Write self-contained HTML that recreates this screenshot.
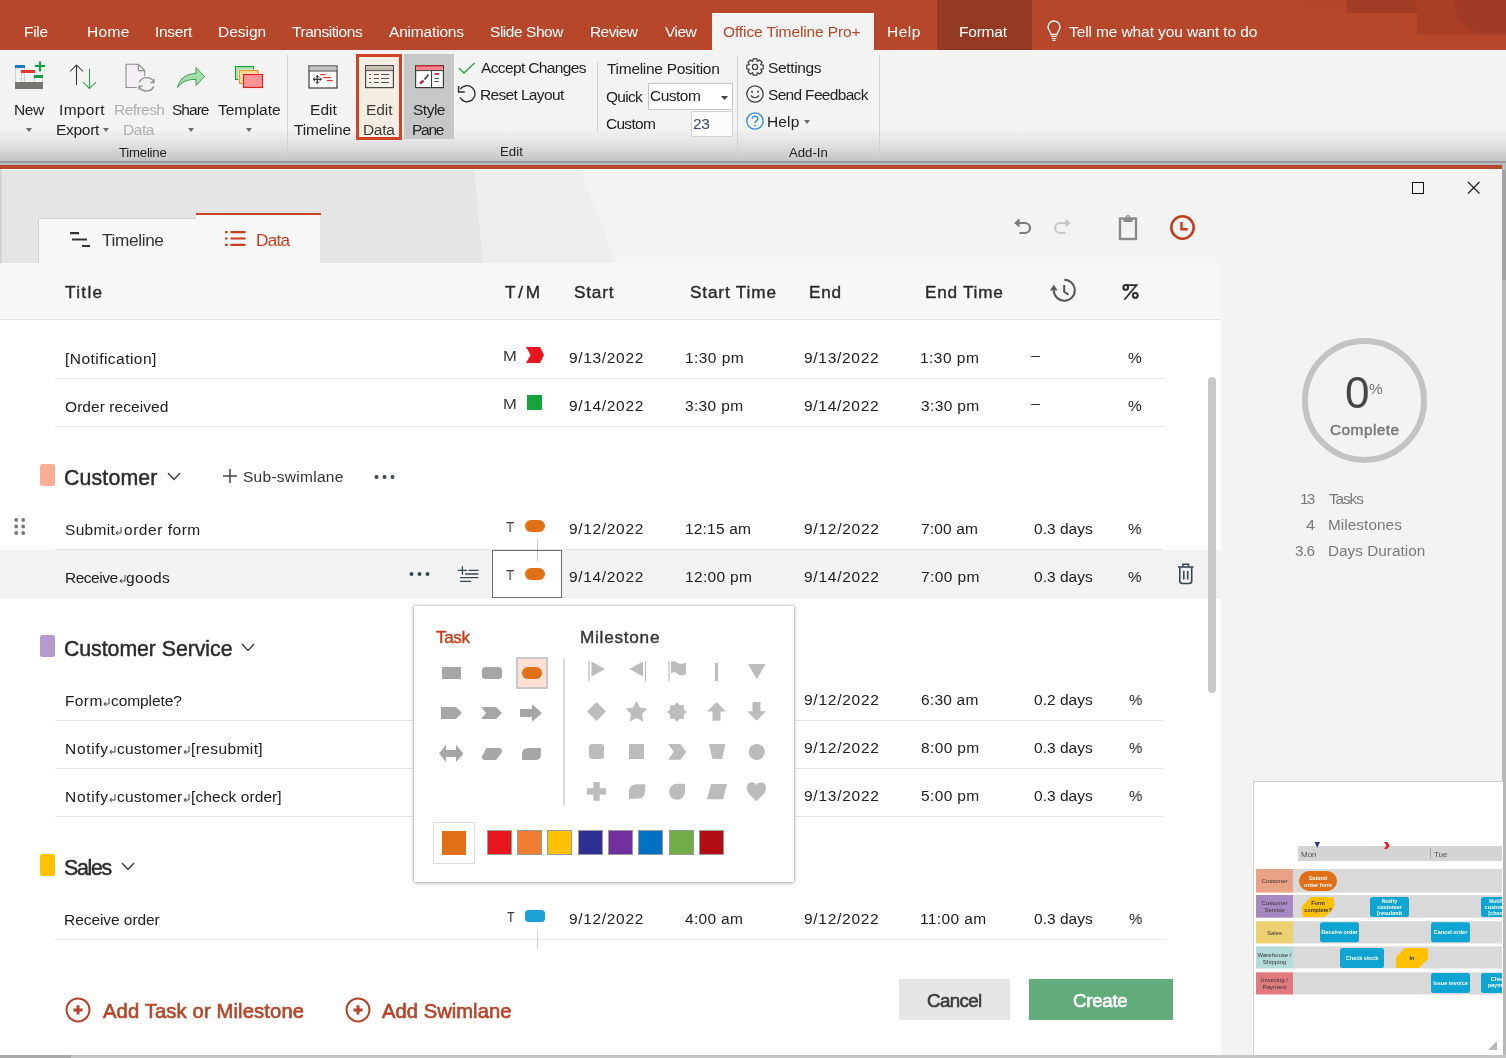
<!DOCTYPE html>
<html><head><meta charset="utf-8"><title>Office Timeline</title><style>
html,body{margin:0;padding:0;}
body{width:1506px;height:1058px;overflow:hidden;position:relative;background:#F3F3F3;font-family:"Liberation Sans",sans-serif;}
.t{position:absolute;white-space:nowrap;will-change:transform;}
.r{position:absolute;}
.s{position:absolute;overflow:visible;}
</style></head><body>
<div class="r" style="left:0px;top:0px;width:1506px;height:50px;background:#B7472A;"></div>
<div class="r" style="left:1347px;top:0px;width:70px;height:13px;background:#A23D25;"></div>
<div class="r" style="left:1417px;top:0px;width:89px;height:35px;background:#A93F26;"></div>
<div class="r" style="left:1300px;top:0px;width:47px;height:12px;background:#B3462A;"></div>
<div class="r" style="left:1455px;top:0px;width:51px;height:33px;background:#A03B23;border-bottom-left-radius:30px"></div>
<div class="r" style="left:712px;top:13px;width:162px;height:38px;background:#F3F3F3;"></div>
<div class="r" style="left:937px;top:0px;width:95px;height:50px;background:#943A22;"></div>
<div class="t" style="left:24.0px;top:24.0px;font-size:15.50px;line-height:15.50px;color:#FFFFFF;letter-spacing:-0.30px;">File</div>
<div class="t" style="left:87.1px;top:24.0px;font-size:15.50px;line-height:15.50px;color:#FFFFFF;letter-spacing:0.32px;">Home</div>
<div class="t" style="left:154.6px;top:24.0px;font-size:15.50px;line-height:15.50px;color:#FFFFFF;letter-spacing:-0.30px;">Insert</div>
<div class="t" style="left:217.8px;top:24.0px;font-size:15.50px;line-height:15.50px;color:#FFFFFF;letter-spacing:-0.01px;">Design</div>
<div class="t" style="left:291.9px;top:24.0px;font-size:15.50px;line-height:15.50px;color:#FFFFFF;letter-spacing:-0.46px;">Transitions</div>
<div class="t" style="left:389.4px;top:24.0px;font-size:15.50px;line-height:15.50px;color:#FFFFFF;letter-spacing:-0.18px;">Animations</div>
<div class="t" style="left:490.4px;top:24.0px;font-size:15.50px;line-height:15.50px;color:#FFFFFF;letter-spacing:-0.46px;">Slide Show</div>
<div class="t" style="left:590.1px;top:24.0px;font-size:15.50px;line-height:15.50px;color:#FFFFFF;letter-spacing:-0.58px;">Review</div>
<div class="t" style="left:665.1px;top:24.0px;font-size:15.50px;line-height:15.50px;color:#FFFFFF;letter-spacing:-0.55px;">View</div>
<div class="t" style="left:723.3px;top:24.0px;font-size:15.50px;line-height:15.50px;color:#B7472A;letter-spacing:-0.11px;">Office Timeline Pro+</div>
<div class="t" style="left:886.8px;top:24.0px;font-size:15.50px;line-height:15.50px;color:#FFFFFF;letter-spacing:0.50px;">Help</div>
<div class="t" style="left:958.7px;top:24.0px;font-size:15.50px;line-height:15.50px;color:#FFFFFF;letter-spacing:-0.21px;">Format</div>
<div class="t" style="left:1068.7px;top:24.0px;font-size:15.50px;line-height:15.50px;color:#FFFFFF;letter-spacing:-0.11px;">Tell me what you want to do</div>
<svg class="s" style="left:1045px;top:20px;" width="18" height="22" viewBox="0 0 18 22"><path d="M6 14.5 C6 12 3 10.5 3 7 A6 6 0 0 1 15 7 C15 10.5 12 12 12 14.5 Z" fill="none" stroke="#fff" stroke-width="1.3"/><path d="M6.3 16.5 H11.7 M6.8 18.5 H11.2 M7.5 20.3 H10.5" stroke="#fff" stroke-width="1.2"/></svg>
<div class="r" style="left:0px;top:50px;width:1506px;height:80px;background:#F3F3F3;"></div>
<div class="r" style="left:0px;top:130px;width:1506px;height:31px;background:linear-gradient(#F1F1F1,#E4E4E4 40%,#C5C5C5);"></div>
<div class="r" style="left:0px;top:161px;width:1506px;height:2px;background:#9C9C9C;"></div>
<div class="r" style="left:0px;top:163px;width:1506px;height:2px;background:#B4BBBD;"></div>
<div class="r" style="left:287px;top:55px;width:1px;height:103px;background:#D2D2D2;"></div>
<div class="r" style="left:597px;top:62px;width:1px;height:70px;background:#D2D2D2;"></div>
<div class="r" style="left:737px;top:55px;width:1px;height:103px;background:#D2D2D2;"></div>
<div class="r" style="left:879px;top:55px;width:1px;height:103px;background:#D2D2D2;"></div>
<svg class="s" style="left:14px;top:60px;" width="32" height="30" viewBox="0 0 32 30"><path d="M1.5 8 V22 M7.5 13 V22 M10.5 8 V22 M20.5 18 V22 M28.5 18 V22" stroke="#CFCFCF" stroke-width="1"/><rect x="1" y="5" width="10" height="3" fill="#1F7BC8"/><rect x="7" y="10" width="14" height="3" fill="#DE3B2B"/><rect x="20" y="15" width="9" height="3" fill="#0E9F3E"/><path d="M21 6 H31 M26 1.5 V11.5" stroke="#0E9F3E" stroke-width="2.2"/><rect x="1" y="22" width="28" height="7" fill="#767572"/></svg>
<div class="t" style="left:13.5px;top:102.0px;font-size:15.50px;line-height:15.50px;color:#232323;letter-spacing:-0.37px;">New</div>
<svg class="s" style="left:26px;top:128px;" width="6" height="4" viewBox="0 0 6 4"><path d="M0 0 H6 L3.0 4 Z" fill="#6B6B6B"/></svg>
<svg class="s" style="left:68px;top:63px;" width="30" height="27" viewBox="0 0 30 27"><path d="M8.5 2 V22 M2 8.5 L8.5 2 L15 8.5" fill="none" stroke="#333" stroke-width="1.05"/><path d="M21.5 6 V25.5 M15 19 L21.5 25.5 L28 19" fill="none" stroke="#2A9A48" stroke-width="1.05"/></svg>
<div class="t" style="left:59.2px;top:102.0px;font-size:15.50px;line-height:15.50px;color:#232323;letter-spacing:0.32px;">Import</div>
<div class="t" style="left:55.6px;top:122.0px;font-size:15.50px;line-height:15.50px;color:#232323;letter-spacing:-0.28px;">Export</div>
<svg class="s" style="left:103px;top:128px;" width="6" height="4" viewBox="0 0 6 4"><path d="M0 0 H6 L3.0 4 Z" fill="#6B6B6B"/></svg>
<svg class="s" style="left:124px;top:62px;" width="34" height="32" viewBox="0 0 34 32"><path d="M2 2.3 H14.4 L20.7 8.6 V25.5 H2 Z" fill="#F4EFF5"/><circle cx="22.5" cy="22.4" r="9.6" fill="#F3F3F3"/><path d="M2 2.3 H14.4 L20.7 8.6 V14.2 M2 2.3 V25.5 H12.8 M14.4 2.3 V8.6 H20.7" fill="none" stroke="#8E8E8E" stroke-width="1.1"/><path d="M15.2 20.6 A8 8 0 0 1 29.8 20.2 M29.8 24.4 A8 8 0 0 1 15.2 24.4" fill="none" stroke="#8E8E8E" stroke-width="1.4"/><path d="M30 16.8 V20.6 H26.4 M15 28 V24.2 H18.6" fill="none" stroke="#8E8E8E" stroke-width="1.3"/></svg>
<div class="t" style="left:113.5px;top:102.0px;font-size:15.50px;line-height:15.50px;color:#B0B0B0;letter-spacing:-0.55px;">Refresh</div>
<div class="t" style="left:122.6px;top:122.0px;font-size:15.50px;line-height:15.50px;color:#B0B0B0;letter-spacing:-0.42px;">Data</div>
<svg class="s" style="left:176px;top:66px;" width="31" height="24" viewBox="0 0 31 24"><path d="M1.5 21.5 C4 12 11 7.5 20 7.5 V1.5 L28.5 10.5 L20 19.5 V13.5 C12 13 6 15.5 1.5 21.5 Z" fill="#A5DDAA" stroke="#3AA24C" stroke-width="1"/></svg>
<div class="t" style="left:171.6px;top:102.0px;font-size:15.50px;line-height:15.50px;color:#232323;letter-spacing:-0.97px;">Share</div>
<svg class="s" style="left:188px;top:128px;" width="6" height="4" viewBox="0 0 6 4"><path d="M0 0 H6 L3.0 4 Z" fill="#6B6B6B"/></svg>
<svg class="s" style="left:234px;top:65px;" width="30" height="24" viewBox="0 0 30 24"><rect x="1.5" y="1.5" width="18" height="13" fill="#A9DDB0" stroke="#17A23E" stroke-width="1.1"/><rect x="4.5" y="4.5" width="20.5" height="15" fill="#FFFFFF"/><rect x="5.5" y="5.5" width="18.5" height="13" fill="#F5DE98" stroke="#EE8E2E" stroke-width="1.1"/><rect x="8.5" y="8.5" width="21" height="15" fill="#FFFFFF"/><rect x="9.5" y="9.5" width="19" height="13" fill="#FF9499" stroke="#DD1F15" stroke-width="1.2"/></svg>
<div class="t" style="left:217.7px;top:102.0px;font-size:15.50px;line-height:15.50px;color:#232323;letter-spacing:-0.05px;">Template</div>
<svg class="s" style="left:246px;top:128px;" width="6" height="4" viewBox="0 0 6 4"><path d="M0 0 H6 L3.0 4 Z" fill="#6B6B6B"/></svg>
<div class="t" style="left:119.2px;top:146.0px;font-size:13.20px;line-height:13.20px;color:#232323;letter-spacing:-0.23px;">Timeline</div>
<svg class="s" style="left:308px;top:65px;" width="30" height="24" viewBox="0 0 30 24"><rect x="1" y="1" width="28" height="22" fill="#fff" stroke="#3C3C3C" stroke-width="1.2"/><rect x="1.6" y="1.6" width="26.8" height="4" fill="#C3C3C3"/><path d="M1 6 H29" stroke="#3C3C3C" stroke-width="1"/><path d="M5 14.3 H13.5 M9.3 10.5 V18.5" stroke="#3C3C3C" stroke-width="1.3"/><path d="M7 12.6 L5 14.3 L7 16 M11.5 12.6 L13.5 14.3 L11.5 16 M7.6 12.2 L9.3 10.5 L11 12.2 M7.6 16.8 L9.3 18.5 L11 16.8" fill="none" stroke="#3C3C3C" stroke-width="1"/><rect x="12" y="8.9" width="5.6" height="1.3" fill="#E03A3A"/><rect x="15.2" y="11.9" width="7.8" height="1.3" fill="#E03A3A"/><rect x="18.8" y="14.9" width="6" height="1.3" fill="#E03A3A"/></svg>
<div class="t" style="left:309.5px;top:102.0px;font-size:15.50px;line-height:15.50px;color:#232323;letter-spacing:0.05px;">Edit</div>
<div class="t" style="left:294.3px;top:122.0px;font-size:15.50px;line-height:15.50px;color:#232323;letter-spacing:-0.13px;">Timeline</div>
<div class="r" style="left:356px;top:54px;width:40px;height:80px;background:#F4EDE1;border:3px solid #CF4426"></div>
<svg class="s" style="left:365px;top:65px;" width="29" height="24" viewBox="0 0 29 24"><rect x="0.6" y="0.6" width="27.8" height="22" fill="#F7F1E6" stroke="#4A4A4A" stroke-width="1.2"/><rect x="1.2" y="1.2" width="26.6" height="4" fill="#C7BFB0"/><path d="M1 5.6 H28" stroke="#4A4A4A" stroke-width="1"/><path d="M4 9.5 H6 M4 13.5 H6 M4 17.5 H6" stroke="#555" stroke-width="1"/><path d="M9 9.5 H14 M9 13.5 H14 M9 17.5 H14 M16 9.5 H24 M16 13.5 H24 M16 17.5 H24" stroke="#555" stroke-width="1"/></svg>
<div class="t" style="left:365.7px;top:102.0px;font-size:15.50px;line-height:15.50px;color:#3A3A3A;letter-spacing:-0.08px;">Edit</div>
<div class="t" style="left:362.7px;top:122.0px;font-size:15.50px;line-height:15.50px;color:#3A3A3A;letter-spacing:-0.32px;">Data</div>
<div class="r" style="left:404px;top:54px;width:50px;height:85px;background:#C7C7C7;"></div>
<svg class="s" style="left:415px;top:65px;" width="29" height="24" viewBox="0 0 29 24"><rect x="0.6" y="0.6" width="27.8" height="22" fill="#fff" stroke="#3C3C3C" stroke-width="1.2"/><rect x="1.2" y="1.2" width="26.6" height="4.2" fill="#F7858F"/><path d="M1 1 H28" stroke="#E0303A" stroke-width="1.2"/><path d="M1 5.6 H28 M16.5 5.6 V23" stroke="#3C3C3C" stroke-width="1"/><path d="M5 18.5 L8.5 15.5" stroke="#D9262E" stroke-width="2.5"/><path d="M9.5 14.5 L13.5 9.5" stroke="#3C3C3C" stroke-width="1.6"/><path d="M19.5 9 H24 " stroke="#D9262E" stroke-width="1.8"/><path d="M19.5 13.5 H24 M19.5 16.5 H24" stroke="#555" stroke-width="1"/></svg>
<div class="t" style="left:412.8px;top:102.0px;font-size:15.50px;line-height:15.50px;color:#232323;letter-spacing:-0.50px;">Style</div>
<div class="t" style="left:412.3px;top:122.0px;font-size:15.50px;line-height:15.50px;color:#232323;letter-spacing:-1.28px;">Pane</div>
<svg class="s" style="left:458px;top:62px;" width="18" height="12" viewBox="0 0 18 12"><path d="M1 6 L6 11 L16.5 1" fill="none" stroke="#2FA046" stroke-width="1.4"/></svg>
<div class="t" style="left:480.8px;top:60.0px;font-size:15.50px;line-height:15.50px;color:#232323;letter-spacing:-0.63px;">Accept Changes</div>
<svg class="s" style="left:457px;top:84px;" width="20" height="20" viewBox="0 0 20 20"><path d="M2.9 13.4 A8 8 0 1 0 3.4 5.2" fill="none" stroke="#333" stroke-width="1.3"/><path d="M1.6 2 V7.9 H7.8" fill="none" stroke="#333" stroke-width="1.5"/></svg>
<div class="t" style="left:479.6px;top:87.0px;font-size:15.50px;line-height:15.50px;color:#232323;letter-spacing:-0.65px;">Reset Layout</div>
<div class="t" style="left:499.9px;top:145.0px;font-size:13.20px;line-height:13.20px;color:#232323;letter-spacing:0.07px;">Edit</div>
<div class="t" style="left:606.7px;top:61.0px;font-size:15.50px;line-height:15.50px;color:#232323;letter-spacing:-0.29px;">Timeline Position</div>
<div class="t" style="left:606.3px;top:89.0px;font-size:15.50px;line-height:15.50px;color:#232323;letter-spacing:-0.73px;">Quick</div>
<div class="r" style="left:648px;top:83px;width:83px;height:25px;background:#fff;border:1px solid #C6C6C6"></div>
<div class="t" style="left:650.4px;top:88.0px;font-size:15.50px;line-height:15.50px;color:#232323;letter-spacing:-0.50px;">Custom</div>
<svg class="s" style="left:721px;top:96px;" width="7" height="4" viewBox="0 0 7 4"><path d="M0 0 H7 L3.5 4 Z" fill="#444"/></svg>
<div class="t" style="left:606.2px;top:116.0px;font-size:15.50px;line-height:15.50px;color:#232323;letter-spacing:-0.72px;">Custom</div>
<div class="r" style="left:691px;top:111px;width:40px;height:24px;background:#FBFBFB;border:1px solid #D4D4D4"></div>
<div class="t" style="left:693.4px;top:116.0px;font-size:15.50px;line-height:15.50px;color:#3B4A6B;letter-spacing:-0.41px;">23</div>
<svg class="s" style="left:746px;top:58px;" width="18" height="18" viewBox="0 0 18 18"><g fill="none" stroke="#3C3C3C" stroke-width="1.2"><path d="M17.22 7.25 L17.22 10.75 L14.75 11.32 L16.04 13.57 L13.57 16.04 L11.42 14.71 L10.75 17.22 L7.25 17.22 L6.68 14.75 L4.43 16.04 L1.96 13.57 L3.29 11.42 L0.78 10.75 L0.78 7.25 L3.25 6.68 L1.96 4.43 L4.43 1.96 L6.58 3.29 L7.25 0.78 L10.75 0.78 L11.32 3.25 L13.57 1.96 L16.04 4.43 L14.71 6.58 Z"/><circle cx="9" cy="9" r="2.6"/></g></svg>
<div class="t" style="left:767.9px;top:60.0px;font-size:15.50px;line-height:15.50px;color:#232323;letter-spacing:-0.36px;">Settings</div>
<svg class="s" style="left:746px;top:85px;" width="18" height="18" viewBox="0 0 18 18"><circle cx="9" cy="9" r="8.2" fill="none" stroke="#3C3C3C" stroke-width="1.2"/><circle cx="6" cy="6.8" r="1" fill="#3C3C3C"/><circle cx="12" cy="6.8" r="1" fill="#3C3C3C"/><path d="M4.8 10.5 Q9 15 13.2 10.5" fill="none" stroke="#3C3C3C" stroke-width="1.2"/></svg>
<div class="t" style="left:767.9px;top:87.0px;font-size:15.50px;line-height:15.50px;color:#232323;letter-spacing:-0.68px;">Send Feedback</div>
<svg class="s" style="left:746px;top:112px;" width="18" height="18" viewBox="0 0 18 18"><circle cx="9" cy="9" r="8.2" fill="none" stroke="#2B88D8" stroke-width="1.3"/><path d="M6.3 6.8 A2.7 2.7 0 1 1 9.5 9.4 Q9 9.8 9 11.2" fill="none" stroke="#2B88D8" stroke-width="1.3"/><circle cx="9" cy="13.6" r="0.9" fill="#2B88D8"/></svg>
<div class="t" style="left:767.4px;top:114.0px;font-size:15.50px;line-height:15.50px;color:#232323;letter-spacing:0.14px;">Help</div>
<svg class="s" style="left:804px;top:120px;" width="6" height="4" viewBox="0 0 6 4"><path d="M0 0 H6 L3.0 4 Z" fill="#6B6B6B"/></svg>
<div class="t" style="left:789.3px;top:146.0px;font-size:13.20px;line-height:13.20px;color:#232323;letter-spacing:-0.02px;">Add-In</div>
<div class="r" style="left:0px;top:165px;width:1502px;height:4px;background:#B7472A;"></div>
<div class="r" style="left:1502px;top:163px;width:4px;height:895px;background:#B8B8B8;"></div>
<div class="r" style="left:1502px;top:170px;width:4px;height:110px;background:#A2A2A2;"></div>
<svg class="s" style="left:0px;top:169px;" width="1502" height="94" viewBox="0 0 1502 94"><rect x="0" y="0" width="1502" height="94" fill="#F3F3F3"/><path d="M0 0 H580 L616 94 H0 Z" fill="#EEEEEE"/><path d="M0 0 H474 L483 94 H0 Z" fill="#E5E5E5"/><rect x="0" y="0" width="1502" height="1" fill="#FAFAFA"/><rect x="0" y="0" width="1.5" height="94" fill="#D0D0D0"/></svg>
<div class="r" style="left:38px;top:218px;width:157px;height:44px;background:#F7F7F7;border:1px solid #D2D2D2"></div>
<div class="r" style="left:196px;top:213px;width:125px;height:50px;background:#F7F7F7;"></div>
<div class="r" style="left:196px;top:213px;width:125px;height:2px;background:#C9472A;"></div>
<div class="r" style="left:320px;top:215px;width:1px;height:48px;background:#E2E2E2;"></div>
<svg class="s" style="left:70px;top:232px;" width="21" height="16" viewBox="0 0 21 16"><path d="M0 1.2 H9 M2 7.5 H17 M12 14 H20" stroke="#333" stroke-width="2.2"/></svg>
<div class="t" style="left:102.4px;top:232.0px;font-size:17.20px;line-height:17.20px;color:#333;letter-spacing:-0.34px;">Timeline</div>
<svg class="s" style="left:225px;top:231px;" width="22" height="16" viewBox="0 0 22 16"><path d="M0 1.2 H2.6 M0 7.5 H2.6 M0 13.8 H2.6 M5.5 1.2 H20.5 M5.5 7.5 H20.5 M5.5 13.8 H20.5" stroke="#C43E1C" stroke-width="2.2"/></svg>
<div class="t" style="left:255.6px;top:232.0px;font-size:17.20px;line-height:17.20px;color:#C43E1C;letter-spacing:-0.77px;">Data</div>
<div class="r" style="left:1412px;top:182px;width:10px;height:10px;border:1.3px solid #111"></div>
<svg class="s" style="left:1467px;top:181px;" width="14" height="14" viewBox="0 0 14 14"><path d="M1 1 L12.5 12.5 M12.5 1 L1 12.5" stroke="#222" stroke-width="1.3"/></svg>
<svg class="s" style="left:1013px;top:217px;" width="20" height="19" viewBox="0 0 20 19"><path d="M5 6 H12 A5 5 0 0 1 12 16 H6.5" fill="none" stroke="#7A7A7A" stroke-width="2.2"/><path d="M1 6 L6.5 1.5 V10.5 Z" fill="#7A7A7A"/></svg>
<svg class="s" style="left:1052px;top:217px;" width="20" height="19" viewBox="0 0 20 19"><path d="M15 6 H8 A5 5 0 0 0 8 16 H13.5" fill="none" stroke="#C8C8C8" stroke-width="2.2"/><path d="M19 6 L13.5 1.5 V10.5 Z" fill="#C8C8C8"/></svg>
<svg class="s" style="left:1118px;top:215px;" width="21" height="26" viewBox="0 0 21 26"><rect x="2" y="3.5" width="16" height="20.5" fill="none" stroke="#8A8A8A" stroke-width="2.4"/><rect x="5.5" y="3" width="9" height="4" fill="#8A8A8A"/><circle cx="10" cy="2.5" r="1.8" fill="none" stroke="#8A8A8A" stroke-width="1.2"/></svg>
<svg class="s" style="left:1169px;top:214px;" width="28" height="28" viewBox="0 0 28 28"><circle cx="13.5" cy="13.5" r="11.2" fill="none" stroke="#C43E1C" stroke-width="2.6"/><path d="M12.5 8 V15.2 H18.8" fill="none" stroke="#C43E1C" stroke-width="2.4"/></svg>
<div class="r" style="left:0px;top:263px;width:1221px;height:792px;background:#FFFFFF;"></div>
<div class="r" style="left:1221px;top:263px;width:281px;height:792px;background:#F3F3F3;"></div>
<div class="r" style="left:0px;top:263px;width:1221px;height:56px;background:#F7F7F7;"></div>
<div class="r" style="left:0px;top:319px;width:1221px;height:1px;background:#E3E3E3;"></div>
<div class="t" style="left:65.2px;top:284.0px;font-size:17.20px;line-height:17.20px;color:#2B2B2B;-webkit-text-stroke:0.4px #2B2B2B;letter-spacing:1.33px;">Title</div>
<div class="t" style="left:504.9px;top:284.0px;font-size:17.20px;line-height:17.20px;color:#2B2B2B;-webkit-text-stroke:0.4px #2B2B2B;letter-spacing:2.72px;">T/M</div>
<div class="t" style="left:573.8px;top:284.0px;font-size:17.20px;line-height:17.20px;color:#2B2B2B;-webkit-text-stroke:0.4px #2B2B2B;letter-spacing:0.79px;">Start</div>
<div class="t" style="left:689.9px;top:284.0px;font-size:17.20px;line-height:17.20px;color:#2B2B2B;-webkit-text-stroke:0.4px #2B2B2B;letter-spacing:0.85px;">Start Time</div>
<div class="t" style="left:809.2px;top:284.0px;font-size:17.20px;line-height:17.20px;color:#2B2B2B;-webkit-text-stroke:0.4px #2B2B2B;letter-spacing:0.75px;">End</div>
<div class="t" style="left:925.3px;top:284.0px;font-size:17.20px;line-height:17.20px;color:#2B2B2B;-webkit-text-stroke:0.4px #2B2B2B;letter-spacing:0.74px;">End Time</div>
<svg class="s" style="left:1120px;top:282px;" width="22" height="22" viewBox="0 0 22 22"><g fill="none" stroke="#2B2B2B" stroke-width="2"><circle cx="5.7" cy="5.4" r="2.4"/><circle cx="15.3" cy="13.4" r="2.4"/></g><path d="M5.7 3.1 H16.6 L4.4 17.8" fill="none" stroke="#2B2B2B" stroke-width="1.7"/></svg>
<svg class="s" style="left:1049px;top:278px;" width="28" height="25" viewBox="0 0 28 25"><path d="M15.3 1.8 A10.5 10.5 0 1 1 4.8 12.5" fill="none" stroke="#555" stroke-width="2"/><path d="M1 12.6 H8.6 L4.8 6.8 Z" fill="#555"/><path d="M15.2 7 V13.8 L19.6 16.6" fill="none" stroke="#555" stroke-width="2"/></svg>
<div class="r" style="left:55px;top:378px;width:1109px;height:1px;background:#E6E6E6;"></div>
<div class="r" style="left:55px;top:426px;width:1109px;height:1px;background:#E6E6E6;"></div>
<div class="r" style="left:55px;top:549px;width:1109px;height:1px;background:#E6E6E6;"></div>
<div class="r" style="left:55px;top:720px;width:1109px;height:1px;background:#E6E6E6;"></div>
<div class="r" style="left:55px;top:768px;width:1109px;height:1px;background:#E6E6E6;"></div>
<div class="r" style="left:55px;top:816px;width:1109px;height:1px;background:#E6E6E6;"></div>
<div class="r" style="left:55px;top:939px;width:1109px;height:1px;background:#E6E6E6;"></div>
<div class="t" style="left:64.5px;top:351.0px;font-size:15.50px;line-height:15.50px;color:#202020;letter-spacing:0.46px;">[Notification]</div>
<div class="t" style="left:502.8px;top:348.0px;font-size:15.50px;line-height:15.50px;color:#3A3A3A;transform:scaleX(1.069);transform-origin:1.24px 0;">M</div>
<svg class="s" style="left:526px;top:347px;" width="18" height="16" viewBox="0 0 18 16"><path d="M0 0 H14 L18 8 L14 16 H0 L4.6 8 Z" fill="#E8141E"/></svg>
<div class="t" style="left:568.6px;top:350.0px;font-size:15.50px;line-height:15.50px;color:#202020;letter-spacing:0.67px;">9/13/2022</div>
<div class="t" style="left:684.5px;top:350.0px;font-size:15.50px;line-height:15.50px;color:#202020;letter-spacing:0.44px;">1:30 pm</div>
<div class="t" style="left:804.3px;top:350.0px;font-size:15.50px;line-height:15.50px;color:#202020;letter-spacing:0.71px;">9/13/2022</div>
<div class="t" style="left:920.1px;top:350.0px;font-size:15.50px;line-height:15.50px;color:#202020;letter-spacing:0.47px;">1:30 pm</div>
<div class="r" style="left:1031px;top:356px;width:9px;height:1.3000000000000114px;background:#333;"></div>
<div class="t" style="left:1128.3px;top:350.0px;font-size:15.50px;line-height:15.50px;color:#202020;">%</div>
<div class="t" style="left:64.9px;top:399.0px;font-size:15.50px;line-height:15.50px;color:#202020;letter-spacing:0.07px;">Order received</div>
<div class="t" style="left:502.8px;top:396.0px;font-size:15.50px;line-height:15.50px;color:#3A3A3A;transform:scaleX(1.069);transform-origin:1.24px 0;">M</div>
<div class="r" style="left:527px;top:395px;width:15px;height:15px;background:#17A23C;"></div>
<div class="t" style="left:568.6px;top:398.0px;font-size:15.50px;line-height:15.50px;color:#202020;letter-spacing:0.67px;">9/14/2022</div>
<div class="t" style="left:685.2px;top:398.0px;font-size:15.50px;line-height:15.50px;color:#202020;letter-spacing:0.34px;">3:30 pm</div>
<div class="t" style="left:804.3px;top:398.0px;font-size:15.50px;line-height:15.50px;color:#202020;letter-spacing:0.71px;">9/14/2022</div>
<div class="t" style="left:920.8px;top:398.0px;font-size:15.50px;line-height:15.50px;color:#202020;letter-spacing:0.37px;">3:30 pm</div>
<div class="r" style="left:1031px;top:403.5px;width:9px;height:1.3000000000000114px;background:#333;"></div>
<div class="t" style="left:1128.3px;top:398.0px;font-size:15.50px;line-height:15.50px;color:#202020;">%</div>
<div class="r" style="left:40px;top:464px;width:15px;height:22px;background:#F7AE95;border-radius:2.5px"></div>
<div class="t" style="left:64.4px;top:468.0px;font-size:21.30px;line-height:21.30px;color:#2B2B2B;-webkit-text-stroke:0.45px #2B2B2B;letter-spacing:0.16px;">Customer</div>
<svg class="s" style="left:167px;top:472px;" width="14" height="9" viewBox="0 0 14 9"><path d="M1 1 L7.0 7.5 L13 1" fill="none" stroke="#3A3A3A" stroke-width="1.4"/></svg>
<svg class="s" style="left:222px;top:468px;" width="16" height="16" viewBox="0 0 16 16"><path d="M8 1 V15 M1 8 H15" stroke="#444" stroke-width="1.5"/></svg>
<div class="t" style="left:242.7px;top:469.0px;font-size:15.50px;line-height:15.50px;color:#333;letter-spacing:0.27px;">Sub-swimlane</div>
<svg class="s" style="left:374px;top:474px;" width="22" height="6" viewBox="0 0 22 6"><circle cx="2.5" cy="3" r="2" fill="#37474F"/><circle cx="10.5" cy="3" r="2" fill="#37474F"/><circle cx="18.5" cy="3" r="2" fill="#37474F"/></svg>
<svg class="s" style="left:13px;top:517px;" width="14" height="19" viewBox="0 0 14 19"><circle cx="3.2" cy="3" r="1.9" fill="#777"/><circle cx="3.2" cy="9.5" r="1.9" fill="#777"/><circle cx="3.2" cy="16" r="1.9" fill="#777"/><circle cx="10.2" cy="3" r="1.9" fill="#777"/><circle cx="10.2" cy="9.5" r="1.9" fill="#777"/><circle cx="10.2" cy="16" r="1.9" fill="#777"/></svg>
<div class="t" style="left:64.8px;top:522.0px;font-size:15.50px;line-height:15.50px;color:#202020;letter-spacing:0.33px;">Submit</div>
<svg class="s" style="left:115.3px;top:526px;" width="8" height="11" viewBox="0 0 8 11"><path d="M6 1 V7 H1" fill="none" stroke="#333" stroke-width="0.95"/><path d="M2.9 4.9 L0.9 7 L2.9 9.1" fill="none" stroke="#333" stroke-width="0.95"/></svg>
<div class="t" style="left:123.9px;top:522.0px;font-size:15.50px;line-height:15.50px;color:#202020;letter-spacing:0.53px;">order form</div>
<div class="t" style="left:505.9px;top:519.0px;font-size:15.50px;line-height:15.50px;color:#3A3A3A;transform:scaleX(0.860);transform-origin:0.31px 0;">T</div>
<div class="r" style="left:525px;top:520px;width:20px;height:12px;background:#E07016;border-radius:6.0px"></div>
<div class="r" style="left:537px;top:539px;width:1px;height:22px;background:#C8C8C8;"></div>
<div class="t" style="left:568.6px;top:521.0px;font-size:15.50px;line-height:15.50px;color:#202020;letter-spacing:0.67px;">9/12/2022</div>
<div class="t" style="left:684.5px;top:521.0px;font-size:15.50px;line-height:15.50px;color:#202020;letter-spacing:0.18px;">12:15 am</div>
<div class="t" style="left:804.3px;top:521.0px;font-size:15.50px;line-height:15.50px;color:#202020;letter-spacing:0.74px;">9/12/2022</div>
<div class="t" style="left:920.5px;top:521.0px;font-size:15.50px;line-height:15.50px;color:#202020;letter-spacing:0.16px;">7:00 am</div>
<div class="t" style="left:1033.5px;top:521.0px;font-size:15.50px;line-height:15.50px;color:#202020;letter-spacing:0.01px;">0.3 days</div>
<div class="t" style="left:1128.4px;top:521.0px;font-size:15.50px;line-height:15.50px;color:#202020;transform:scaleX(0.983);transform-origin:0.54px 0;">%</div>
<div class="r" style="left:0px;top:550px;width:1221px;height:48px;background:#F2F2F2;"></div>
<div class="r" style="left:0px;top:597px;width:1221px;height:1px;background:#E8E8E8;"></div>
<div class="r" style="left:537px;top:550px;width:1px;height:11px;background:#C8C8C8;"></div>
<div class="t" style="left:65.0px;top:570.0px;font-size:15.50px;line-height:15.50px;color:#202020;letter-spacing:-0.50px;">Receive</div>
<svg class="s" style="left:118.5px;top:574px;" width="8" height="11" viewBox="0 0 8 11"><path d="M6 1 V7 H1" fill="none" stroke="#333" stroke-width="0.95"/><path d="M2.9 4.9 L0.9 7 L2.9 9.1" fill="none" stroke="#333" stroke-width="0.95"/></svg>
<div class="t" style="left:126.3px;top:570.0px;font-size:15.50px;line-height:15.50px;color:#202020;letter-spacing:0.36px;">goods</div>
<svg class="s" style="left:409px;top:571px;" width="22" height="6" viewBox="0 0 22 6"><circle cx="2.5" cy="3" r="2" fill="#37474F"/><circle cx="10.5" cy="3" r="2" fill="#37474F"/><circle cx="18.5" cy="3" r="2" fill="#37474F"/></svg>
<svg class="s" style="left:457px;top:565px;" width="22" height="18" viewBox="0 0 22 18"><path d="M1 5.4 H10 M5.4 1.2 V9.7" stroke="#37474F" stroke-width="1.3"/><path d="M12 5.4 H21 M8.5 9 H21 M3.5 12.6 H21 M3.5 16.3 H13.5" stroke="#37474F" stroke-width="1.3" stroke-linecap="round"/></svg>
<div class="r" style="left:492px;top:550px;width:68px;height:46px;background:#fff;border:1px solid #6B6B6B"></div>
<div class="r" style="left:537px;top:551px;width:1px;height:10px;background:#C8C8C8;"></div>
<div class="t" style="left:505.9px;top:567.0px;font-size:15.50px;line-height:15.50px;color:#3A3A3A;transform:scaleX(0.860);transform-origin:0.31px 0;">T</div>
<div class="r" style="left:525px;top:568px;width:20px;height:12px;background:#E07016;border-radius:6.0px"></div>
<div class="t" style="left:568.6px;top:569.0px;font-size:15.50px;line-height:15.50px;color:#202020;letter-spacing:0.67px;">9/14/2022</div>
<div class="t" style="left:684.5px;top:569.0px;font-size:15.50px;line-height:15.50px;color:#202020;letter-spacing:0.32px;">12:00 pm</div>
<div class="t" style="left:804.3px;top:569.0px;font-size:15.50px;line-height:15.50px;color:#202020;letter-spacing:0.74px;">9/14/2022</div>
<div class="t" style="left:920.5px;top:569.0px;font-size:15.50px;line-height:15.50px;color:#202020;letter-spacing:0.41px;">7:00 pm</div>
<div class="t" style="left:1033.5px;top:569.0px;font-size:15.50px;line-height:15.50px;color:#202020;letter-spacing:0.01px;">0.3 days</div>
<div class="t" style="left:1128.4px;top:569.0px;font-size:15.50px;line-height:15.50px;color:#202020;transform:scaleX(0.983);transform-origin:0.54px 0;">%</div>
<svg class="s" style="left:1177px;top:563px;" width="18" height="22" viewBox="0 0 18 22"><path d="M1 4 H16.5" stroke="#37474F" stroke-width="1.6"/><path d="M6 3.5 V1.2 H11.5 V3.5" fill="none" stroke="#37474F" stroke-width="1.5"/><path d="M2.8 4.5 V18 Q2.8 20.5 5.5 20.5 H12 Q14.7 20.5 14.7 18 V4.5" fill="none" stroke="#37474F" stroke-width="1.6"/><path d="M6.8 8 V16.5 M10.7 8 V16.5" stroke="#37474F" stroke-width="1.6"/></svg>
<div class="r" style="left:40px;top:635px;width:15px;height:22px;background:#B59AD0;border-radius:2.5px"></div>
<div class="t" style="left:64.4px;top:639.0px;font-size:21.30px;line-height:21.30px;color:#2B2B2B;-webkit-text-stroke:0.45px #2B2B2B;letter-spacing:-0.05px;">Customer Service</div>
<svg class="s" style="left:241px;top:643px;" width="14" height="9" viewBox="0 0 14 9"><path d="M1 1 L7.0 7.5 L13 1" fill="none" stroke="#3A3A3A" stroke-width="1.4"/></svg>
<div class="t" style="left:64.6px;top:693.0px;font-size:15.50px;line-height:15.50px;color:#202020;letter-spacing:0.39px;">Form</div>
<svg class="s" style="left:102.6px;top:697px;" width="8" height="11" viewBox="0 0 8 11"><path d="M6 1 V7 H1" fill="none" stroke="#333" stroke-width="0.95"/><path d="M2.9 4.9 L0.9 7 L2.9 9.1" fill="none" stroke="#333" stroke-width="0.95"/></svg>
<div class="t" style="left:111.0px;top:693.0px;font-size:15.50px;line-height:15.50px;color:#202020;letter-spacing:-0.07px;">complete?</div>
<div class="t" style="left:804.1px;top:692.0px;font-size:15.50px;line-height:15.50px;color:#202020;letter-spacing:0.75px;">9/12/2022</div>
<div class="t" style="left:920.5px;top:692.0px;font-size:15.50px;line-height:15.50px;color:#202020;letter-spacing:0.23px;">6:30 am</div>
<div class="t" style="left:1033.5px;top:692.0px;font-size:15.50px;line-height:15.50px;color:#202020;letter-spacing:0.02px;">0.2 days</div>
<div class="t" style="left:1128.6px;top:692.0px;font-size:15.50px;line-height:15.50px;color:#202020;transform:scaleX(0.960);transform-origin:0.54px 0;">%</div>
<div class="t" style="left:64.6px;top:741.0px;font-size:15.50px;line-height:15.50px;color:#202020;letter-spacing:0.69px;">Notify</div>
<svg class="s" style="left:108.7px;top:745px;" width="8" height="11" viewBox="0 0 8 11"><path d="M6 1 V7 H1" fill="none" stroke="#333" stroke-width="0.95"/><path d="M2.9 4.9 L0.9 7 L2.9 9.1" fill="none" stroke="#333" stroke-width="0.95"/></svg>
<div class="t" style="left:117.1px;top:741.0px;font-size:15.50px;line-height:15.50px;color:#202020;letter-spacing:0.22px;">customer</div>
<svg class="s" style="left:183.2px;top:745px;" width="8" height="11" viewBox="0 0 8 11"><path d="M6 1 V7 H1" fill="none" stroke="#333" stroke-width="0.95"/><path d="M2.9 4.9 L0.9 7 L2.9 9.1" fill="none" stroke="#333" stroke-width="0.95"/></svg>
<div class="t" style="left:191.0px;top:741.0px;font-size:15.50px;line-height:15.50px;color:#202020;letter-spacing:0.40px;">[resubmit]</div>
<div class="t" style="left:804.1px;top:740.0px;font-size:15.50px;line-height:15.50px;color:#202020;letter-spacing:0.75px;">9/12/2022</div>
<div class="t" style="left:920.7px;top:740.0px;font-size:15.50px;line-height:15.50px;color:#202020;letter-spacing:0.37px;">8:00 pm</div>
<div class="t" style="left:1033.5px;top:740.0px;font-size:15.50px;line-height:15.50px;color:#202020;letter-spacing:0.02px;">0.3 days</div>
<div class="t" style="left:1128.6px;top:740.0px;font-size:15.50px;line-height:15.50px;color:#202020;transform:scaleX(0.960);transform-origin:0.54px 0;">%</div>
<div class="t" style="left:64.6px;top:789.0px;font-size:15.50px;line-height:15.50px;color:#202020;letter-spacing:0.69px;">Notify</div>
<svg class="s" style="left:108.7px;top:793px;" width="8" height="11" viewBox="0 0 8 11"><path d="M6 1 V7 H1" fill="none" stroke="#333" stroke-width="0.95"/><path d="M2.9 4.9 L0.9 7 L2.9 9.1" fill="none" stroke="#333" stroke-width="0.95"/></svg>
<div class="t" style="left:117.1px;top:789.0px;font-size:15.50px;line-height:15.50px;color:#202020;letter-spacing:0.22px;">customer</div>
<svg class="s" style="left:183.2px;top:793px;" width="8" height="11" viewBox="0 0 8 11"><path d="M6 1 V7 H1" fill="none" stroke="#333" stroke-width="0.95"/><path d="M2.9 4.9 L0.9 7 L2.9 9.1" fill="none" stroke="#333" stroke-width="0.95"/></svg>
<div class="t" style="left:191.0px;top:789.0px;font-size:15.50px;line-height:15.50px;color:#202020;letter-spacing:0.09px;">[check order]</div>
<div class="t" style="left:804.1px;top:788.0px;font-size:15.50px;line-height:15.50px;color:#202020;letter-spacing:0.75px;">9/13/2022</div>
<div class="t" style="left:920.7px;top:788.0px;font-size:15.50px;line-height:15.50px;color:#202020;letter-spacing:0.37px;">5:00 pm</div>
<div class="t" style="left:1033.5px;top:788.0px;font-size:15.50px;line-height:15.50px;color:#202020;letter-spacing:0.02px;">0.3 days</div>
<div class="t" style="left:1128.6px;top:788.0px;font-size:15.50px;line-height:15.50px;color:#202020;transform:scaleX(0.960);transform-origin:0.54px 0;">%</div>
<div class="r" style="left:40px;top:854px;width:15px;height:22px;background:#FFC000;border-radius:2.5px"></div>
<div class="t" style="left:64.2px;top:858.0px;font-size:21.30px;line-height:21.30px;color:#2B2B2B;-webkit-text-stroke:0.45px #2B2B2B;letter-spacing:-1.29px;">Sales</div>
<svg class="s" style="left:121px;top:862px;" width="14" height="9" viewBox="0 0 14 9"><path d="M1 1 L7.0 7.5 L13 1" fill="none" stroke="#3A3A3A" stroke-width="1.4"/></svg>
<div class="t" style="left:64.0px;top:912.0px;font-size:15.50px;line-height:15.50px;color:#202020;letter-spacing:-0.06px;">Receive order</div>
<div class="t" style="left:506.5px;top:909.0px;font-size:15.50px;line-height:15.50px;color:#3A3A3A;transform:scaleX(0.792);transform-origin:0.31px 0;">T</div>
<div class="r" style="left:524.5px;top:909.5px;width:20.0px;height:12.5px;background:#1BA1D5;border-radius:3.5px"></div>
<div class="r" style="left:537px;top:930px;width:1px;height:19px;background:#D0D0D0;"></div>
<div class="t" style="left:568.6px;top:911.0px;font-size:15.50px;line-height:15.50px;color:#202020;letter-spacing:0.67px;">9/12/2022</div>
<div class="t" style="left:685.4px;top:911.0px;font-size:15.50px;line-height:15.50px;color:#202020;letter-spacing:0.30px;">4:00 am</div>
<div class="t" style="left:804.3px;top:911.0px;font-size:15.50px;line-height:15.50px;color:#202020;letter-spacing:0.72px;">9/12/2022</div>
<div class="t" style="left:920.1px;top:911.0px;font-size:15.50px;line-height:15.50px;color:#202020;letter-spacing:0.37px;">11:00 am</div>
<div class="t" style="left:1033.5px;top:911.0px;font-size:15.50px;line-height:15.50px;color:#202020;letter-spacing:0.02px;">0.3 days</div>
<div class="t" style="left:1128.6px;top:911.0px;font-size:15.50px;line-height:15.50px;color:#202020;transform:scaleX(0.960);transform-origin:0.54px 0;">%</div>
<div class="r" style="left:1208px;top:377px;width:8px;height:316px;background:#C8C8C8; border-radius:4px;"></div>
<svg class="s" style="left:65.4px;top:996.5px;" width="26" height="26" viewBox="0 0 26 26"><circle cx="13" cy="12.9" r="11.5" fill="none" stroke="#B5452A" stroke-width="2"/><path d="M13 8.3 V17.5 M8.4 12.9 H17.6" stroke="#B5452A" stroke-width="3"/></svg>
<svg class="s" style="left:344.7px;top:996.5px;" width="26" height="26" viewBox="0 0 26 26"><circle cx="13" cy="12.9" r="11.5" fill="none" stroke="#B5452A" stroke-width="2"/><path d="M13 8.3 V17.5 M8.4 12.9 H17.6" stroke="#B5452A" stroke-width="3"/></svg>
<div class="t" style="left:102.8px;top:1001.0px;font-size:20.20px;line-height:20.20px;color:#B5452A;-webkit-text-stroke:0.65px #B5452A;letter-spacing:0.14px;">Add Task or Milestone</div>
<div class="t" style="left:382.1px;top:1001.0px;font-size:20.20px;line-height:20.20px;color:#B5452A;-webkit-text-stroke:0.65px #B5452A;letter-spacing:0.03px;">Add Swimlane</div>
<div class="r" style="left:899px;top:979px;width:111px;height:41px;background:#E6E6E6;"></div>
<div class="t" style="left:926.5px;top:992.0px;font-size:18.70px;line-height:18.70px;color:#3B3B3B;-webkit-text-stroke:0.6px #3B3B3B;letter-spacing:-0.60px;">Cancel</div>
<div class="r" style="left:1029px;top:979px;width:144px;height:41px;background:#62AB7B;"></div>
<div class="t" style="left:1072.6px;top:992.0px;font-size:18.70px;line-height:18.70px;color:#FFFFFF;-webkit-text-stroke:0.6px #FFFFFF;letter-spacing:-0.28px;">Create</div>
<div class="r" style="left:0px;top:1055px;width:1506px;height:3px;background:#C6C6C6;"></div>
<div class="r" style="left:0px;top:1055px;width:71px;height:3px;background:#A9A9A9;"></div>
<div class="r" style="left:414px;top:606px;width:380px;height:276px;background:#fff;box-shadow:0 0 2px rgba(0,0,0,0.35),0 1px 5px rgba(0,0,0,0.25)"></div>
<div class="t" style="left:436.0px;top:629.0px;font-size:17.20px;line-height:17.20px;color:#C43E1C;-webkit-text-stroke:0.4px #C43E1C;letter-spacing:-0.43px;">Task</div>
<div class="t" style="left:580.3px;top:629.0px;font-size:17.20px;line-height:17.20px;color:#333333;-webkit-text-stroke:0.4px #333333;letter-spacing:0.74px;">Milestone</div>
<div class="r" style="left:563px;top:658px;width:2px;height:148px;background:#DCDCDC;"></div>
<div class="r" style="left:516px;top:657px;width:28px;height:28px;background:#FDDFD5;border:2px solid #C8C8C8"></div>
<svg class="s" style="left:0px;top:0px;pointer-events:none" width="1506" height="1058" viewBox="0 0 1506 1058"><rect x="442" y="667" width="19" height="12" fill="#A6A6A6"/><rect x="482" y="667" width="20" height="12" rx="3.5" fill="#A6A6A6"/><rect x="522" y="667" width="20" height="12" rx="6" fill="#E07016"/><path d="M441 707 H456 L462 713 L456 719 H441 Z" fill="#A6A6A6"/><path d="M481 707 H496 L502 713 L496 719 H481 L486 713 Z" fill="#A6A6A6"/><path d="M520 709 H532 V704.3 L542 713 L532 721.7 V717 H520 Z" fill="#A6A6A6"/><path d="M439 753.5 L446 745 V750 H456 V745 L463.5 753.5 L456 762 V757 H446 V762 Z" fill="#A6A6A6"/><path d="M486 748 H499 Q502 748 502 751 Q502 753 500 755 L496 760 H485 Q482 760 482 757 Q482 755 484 753 Z" fill="#A6A6A6"/><path d="M528 748 H541 V754 Q541 760 535 760 H522 V754 Q522 748 528 748 Z" fill="#A6A6A6"/><path d="M589 661 V681.5" stroke="#BDBCBD" stroke-width="1.2"/><path d="M591.5 661.5 L605 669 L591.5 676.5 Z" fill="#BDBCBD"/><path d="M645.5 661 V681.5" stroke="#BDBCBD" stroke-width="1.2"/><path d="M643 661.5 L629.5 669 L643 676.5 Z" fill="#BDBCBD"/><path d="M669 661 V681.5" stroke="#BDBCBD" stroke-width="1.2"/><path d="M671 662 Q675 660 678 663 Q681 665 686 662.5 V674 Q681 677 678 674 Q675 671 671 673.5 Z" fill="#BDBCBD"/><rect x="715" y="663" width="3" height="18" fill="#BDBCBD"/><path d="M748 664 H765.6 L756.8 679.3 Z" fill="#BDBCBD"/><path d="M596.5 702 L606 711.5 L596.5 721 L587 711.5 Z" fill="#BDBCBD"/><path d="M636.50 701.00 L639.91 707.61 L647.25 708.81 L642.02 714.09 L643.14 721.44 L636.50 718.10 L629.86 721.44 L630.98 714.09 L625.75 708.81 L633.09 707.61 Z" fill="#BDBCBD"/><path d="M677.00 702.20 L679.83 705.16 L683.93 705.07 L683.84 709.17 L686.80 712.00 L683.84 714.83 L683.93 718.93 L679.83 718.84 L677.00 721.80 L674.17 718.84 L670.07 718.93 L670.16 714.83 L667.20 712.00 L670.16 709.17 L670.07 705.07 L674.17 705.16 Z" fill="#BDBCBD"/><path d="M716.5 702 L726 711.5 H720.5 V720.8 H712.5 V711.5 H707 Z" fill="#BDBCBD"/><path d="M756.5 720.8 L766 711.3 H760.5 V702 H752.5 V711.3 H747 Z" fill="#BDBCBD"/><rect x="589" y="744" width="15" height="15" rx="3" fill="#BDBCBD"/><rect x="629" y="744" width="15" height="15" fill="#BDBCBD"/><path d="M668 744 H680.5 L686.3 751.8 L680.5 759.8 H668 L673.8 751.8 Z" fill="#BDBCBD"/><path d="M709 744 H725.5 L722 759 H712.5 Z" fill="#BDBCBD"/><circle cx="756.8" cy="752" r="8" fill="#BDBCBD"/><path d="M593.3 782 H599.7 V788.2 H606 V794.6 H599.7 V800.8 H593.3 V794.6 H587 V788.2 H593.3 Z" fill="#BDBCBD"/><path d="M637 784.2 H645.2 V791 Q645.2 798.7 637 798.7 H629 V791 Q629 784.2 637 784.2 Z" fill="#BDBCBD"/><path d="M677 783.8 H685 V791.8 A8 8 0 1 1 677 783.8 Z" fill="#BDBCBD"/><path d="M711 784 H727 L723 799.3 H707 Z" fill="#BDBCBD"/><path d="M756.4 801.2 L749 794 Q746.5 791.5 746.7 788 Q747 782.3 752 782.3 Q755 782.3 756.4 785 Q757.8 782.3 760.8 782.3 Q766 782.3 766 788 Q766 791.5 763.8 794 Z" fill="#BDBCBD"/></svg>
<div class="r" style="left:433px;top:822px;width:40px;height:40px;background:#fff;border:1px solid #DDDDDD"></div>
<div class="r" style="left:442px;top:831px;width:24px;height:24px;background:#E07016;"></div>
<div class="r" style="left:487px;top:830px;width:23px;height:23px;background:#E8171F;border:1px solid #9A9A9A"></div>
<div class="r" style="left:517px;top:830px;width:23px;height:23px;background:#ED7D31;border:1px solid #9A9A9A"></div>
<div class="r" style="left:547px;top:830px;width:23px;height:23px;background:#FFC000;border:1px solid #9A9A9A"></div>
<div class="r" style="left:578px;top:830px;width:23px;height:23px;background:#2E3192;border:1px solid #9A9A9A"></div>
<div class="r" style="left:608px;top:830px;width:23px;height:23px;background:#7030A0;border:1px solid #9A9A9A"></div>
<div class="r" style="left:638px;top:830px;width:23px;height:23px;background:#0070C0;border:1px solid #9A9A9A"></div>
<div class="r" style="left:669px;top:830px;width:23px;height:23px;background:#70AD47;border:1px solid #9A9A9A"></div>
<div class="r" style="left:699px;top:830px;width:23px;height:23px;background:#B10E14;border:1px solid #9A9A9A"></div>
<svg class="s" style="left:1300px;top:336px;" width="130" height="130" viewBox="0 0 130 130"><circle cx="64.5" cy="64.4" r="59.5" fill="none" stroke="#C3C3C3" stroke-width="6"/></svg>
<div class="t" style="left:1345.1px;top:371.0px;font-size:44.50px;line-height:44.50px;color:#444444;transform:scaleX(0.988);transform-origin:1.78px 0;">0</div>
<div class="t" style="left:1368.9px;top:381.0px;font-size:15.50px;line-height:15.50px;color:#777777;">%</div>
<div class="t" style="left:1329.6px;top:422.0px;font-size:15.40px;line-height:15.40px;color:#777777;-webkit-text-stroke:0.45px #777777;letter-spacing:0.47px;">Complete</div>
<div class="t" style="left:1299.7px;top:491.0px;font-size:15.30px;line-height:15.30px;color:#7A7A7A;letter-spacing:-1.72px;">13</div>
<div class="t" style="left:1328.9px;top:491.0px;font-size:15.30px;line-height:15.30px;color:#7A7A7A;letter-spacing:-1.06px;">Tasks</div>
<div class="t" style="left:1305.7px;top:517.0px;font-size:15.30px;line-height:15.30px;color:#7A7A7A;transform:scaleX(1.064);transform-origin:0.31px 0;">4</div>
<div class="t" style="left:1328.0px;top:517.0px;font-size:15.30px;line-height:15.30px;color:#7A7A7A;letter-spacing:0.08px;">Milestones</div>
<div class="t" style="left:1294.9px;top:543.0px;font-size:15.30px;line-height:15.30px;color:#7A7A7A;letter-spacing:-0.61px;">3.6</div>
<div class="t" style="left:1328.0px;top:543.0px;font-size:15.30px;line-height:15.30px;color:#7A7A7A;letter-spacing:0.02px;">Days Duration</div>
<div class="r" style="left:1253px;top:781px;width:249px;height:273px;background:#fff;border-left:1px solid #CFCFCF;border-top:1px solid #CFCFCF;overflow:hidden"></div>
<svg class="s" style="left:0px;top:0px;overflow:hidden" width="1502" height="1058" viewBox="0 0 1502 1058"><rect x="1298" y="846" width="204" height="15" fill="#D4D4D4"/><rect x="1430" y="848" width="1" height="11" fill="#AAAAAA"/><text x="1301" y="857" font-family="Liberation Sans" font-size="8" fill="#555">Mon</text><text x="1434" y="857" font-family="Liberation Sans" font-size="8" fill="#555">Tue</text><path d="M1314.5 842 H1320 L1317.2 847.8 Z" fill="#2E3192"/><path d="M1384 842 H1387 L1389.8 845.5 L1387 849 H1384 L1386.5 845.5 Z" fill="#E8141E"/><rect x="1293" y="869" width="209" height="23.6" fill="#D9D9D9"/><rect x="1256" y="869" width="37" height="23.6" fill="#E8A286"/><text x="1274.5" y="883.0" font-family="Liberation Sans" font-size="6" fill="#333" text-anchor="middle">Customer</text><rect x="1293" y="895" width="209" height="22.7" fill="#D9D9D9"/><rect x="1256" y="895" width="37" height="22.7" fill="#A589C0"/><text x="1274.5" y="905.4" font-family="Liberation Sans" font-size="6" fill="#333" text-anchor="middle">Customer</text><text x="1274.5" y="912.4" font-family="Liberation Sans" font-size="6" fill="#333" text-anchor="middle">Service</text><rect x="1293" y="921.3" width="209" height="22.2" fill="#D9D9D9"/><rect x="1256" y="921.3" width="37" height="22.2" fill="#EDD070"/><text x="1274.5" y="934.6" font-family="Liberation Sans" font-size="6" fill="#333" text-anchor="middle">Sales</text><rect x="1293" y="946.4" width="209" height="22.1" fill="#D9D9D9"/><rect x="1256" y="946.4" width="37" height="22.1" fill="#B3DCD9"/><text x="1274.5" y="956.5" font-family="Liberation Sans" font-size="6" fill="#333" text-anchor="middle">Warehouse /</text><text x="1274.5" y="963.5" font-family="Liberation Sans" font-size="6" fill="#333" text-anchor="middle">Shipping</text><rect x="1293" y="972.3" width="209" height="22.2" fill="#D9D9D9"/><rect x="1256" y="972.3" width="37" height="22.2" fill="#E17A7F"/><text x="1274.5" y="982.4" font-family="Liberation Sans" font-size="6" fill="#333" text-anchor="middle">Invoicing /</text><text x="1274.5" y="989.4" font-family="Liberation Sans" font-size="6" fill="#333" text-anchor="middle">Payment</text><rect x="1299" y="871" width="38.0" height="20.0" rx="10" fill="#E07016"/><path d="M1311.0 897 H1332.0 Q1334 897 1334 900.0 V908.0 L1325.0 917 H1304.0 Q1302 917 1302 914.0 V906.0 Z" fill="#FFC000"/><rect x="1370" y="897" width="39.0" height="20.0" rx="2.5" fill="#0EA5D2"/><rect x="1481" y="897" width="29.0" height="20.0" rx="2.5" fill="#0EA5D2"/><rect x="1320" y="922.3" width="39.0" height="19.9" rx="2.5" fill="#0EA5D2"/><rect x="1431" y="922.3" width="39.0" height="19.9" rx="2.5" fill="#0EA5D2"/><rect x="1340" y="948" width="44.0" height="20.0" rx="2.5" fill="#0EA5D2"/><path d="M1405.0 948 H1426.0 Q1428 948 1428 951.0 V959.0 L1419.0 968 H1398.0 Q1396 968 1396 965.0 V957.0 Z" fill="#FFC000"/><rect x="1431" y="973" width="39.0" height="20.0" rx="2.5" fill="#0EA5D2"/><rect x="1481" y="973" width="29.0" height="20.0" rx="2.5" fill="#0EA5D2"/><text x="1318" y="879.5" font-family="Liberation Sans" font-size="5.5" font-weight="bold" fill="#fff" text-anchor="middle">Submit</text><text x="1318" y="886.5" font-family="Liberation Sans" font-size="5.5" font-weight="bold" fill="#fff" text-anchor="middle">order form</text><text x="1318" y="905" font-family="Liberation Sans" font-size="5.5" font-weight="bold" fill="#333" text-anchor="middle">Form</text><text x="1318" y="912" font-family="Liberation Sans" font-size="5.5" font-weight="bold" fill="#333" text-anchor="middle">complete?</text><text x="1389.5" y="902.5" font-family="Liberation Sans" font-size="5.5" font-weight="bold" fill="#fff" text-anchor="middle">Notify</text><text x="1389.5" y="909" font-family="Liberation Sans" font-size="5.5" font-weight="bold" fill="#fff" text-anchor="middle">customer</text><text x="1389.5" y="915" font-family="Liberation Sans" font-size="5.5" font-weight="bold" fill="#fff" text-anchor="middle">[resubmit</text><text x="1339.5" y="934" font-family="Liberation Sans" font-size="5.5" font-weight="bold" fill="#fff" text-anchor="middle">Receive order</text><text x="1450.5" y="934" font-family="Liberation Sans" font-size="5.5" font-weight="bold" fill="#fff" text-anchor="middle">Cancel order</text><text x="1362" y="960" font-family="Liberation Sans" font-size="5.5" font-weight="bold" fill="#fff" text-anchor="middle">Check stock</text><text x="1412" y="960" font-family="Liberation Sans" font-size="5.5" font-weight="bold" fill="#333" text-anchor="middle">In</text><text x="1450.5" y="985" font-family="Liberation Sans" font-size="5.5" font-weight="bold" fill="#fff" text-anchor="middle">Issue invoice</text><text x="1497" y="902.5" font-family="Liberation Sans" font-size="5.5" font-weight="bold" fill="#fff" text-anchor="middle">Notify</text><text x="1497" y="909" font-family="Liberation Sans" font-size="5.5" font-weight="bold" fill="#fff" text-anchor="middle">customer</text><text x="1497" y="915" font-family="Liberation Sans" font-size="5.5" font-weight="bold" fill="#fff" text-anchor="middle">[check</text><text x="1499" y="980.5" font-family="Liberation Sans" font-size="5.5" font-weight="bold" fill="#fff" text-anchor="middle">Check</text><text x="1499" y="987" font-family="Liberation Sans" font-size="5.5" font-weight="bold" fill="#fff" text-anchor="middle">payment</text><path d="M1497 1041 L1488 1050 H1497 Z" fill="#9A9A9A" opacity="0.7"/></svg>
</body></html>
